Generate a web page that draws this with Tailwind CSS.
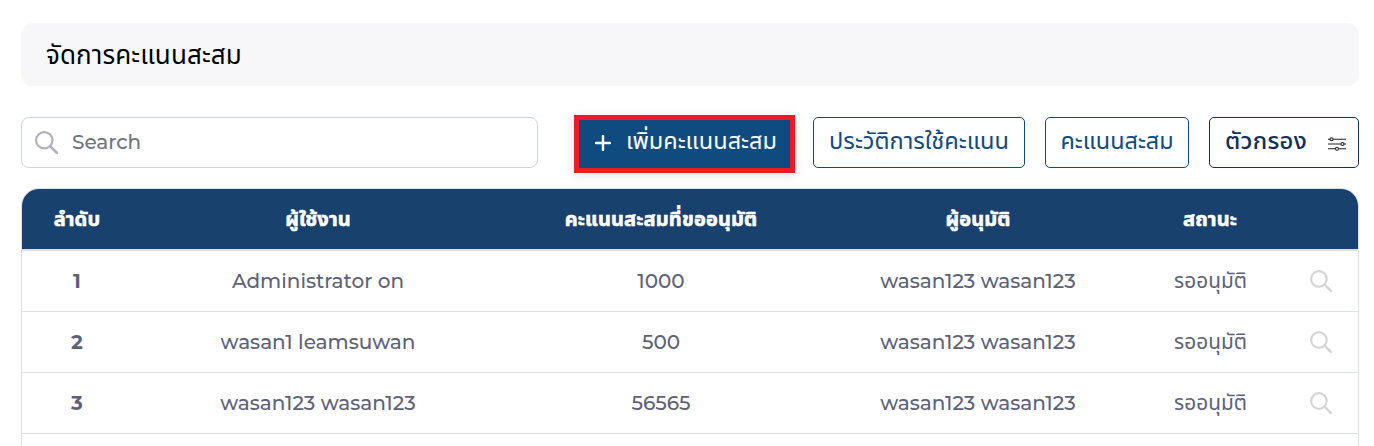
<!DOCTYPE html>
<html lang="th">
<head>
<meta charset="utf-8">
<title>จัดการคะแนนสะสม</title>
<script src="https://cdn.jsdelivr.net/npm/@tailwindcss/browser@4"></script>
</head>
<body class="h-[446px] overflow-hidden bg-white pl-[21px] pr-[15px] pt-[23px] font-['Montserrat','Inter','Noto_Sans_Thai',sans-serif] text-[20px] text-[#5e6278]">
<svg class="hidden"><symbol id="lens" viewBox="0 0 22 22"><circle cx="8.9" cy="8.9" r="7.8" fill="none" stroke="currentColor" stroke-width="2.1"/><path d="M14.5 14.5L20.8 20.8" stroke="currentColor" stroke-width="2.4" stroke-linecap="round"/></symbol></svg>
<header class="flex h-[63px] items-center rounded-xl bg-[#f7f7fa] pl-[25px] text-[26px] tracking-[0.1px] text-black"><h1 class="whitespace-nowrap pt-px">จัดการคะแนนสะสม</h1></header>
<div class="mt-[29px] flex h-[58px] items-start">
  <label class="mt-[2px] flex h-[51px] w-[517px] items-center rounded-lg border border-[#ced4da] pb-px pl-[13px]">
    <svg class="size-[23px] text-[#b2b0bb]"><use href="#lens"/></svg>
    <span class="ml-[14px] text-[20px] font-medium text-[#6c757d]">Search</span>
  </label>
  <button class="ml-[36px] flex h-[58px] w-[221px] items-center border-[5px] border-[#ed1c24] bg-[#104b80] pb-[6px] pl-[16px] text-[23.5px] text-white shadow-[0_2px_10px_rgba(0,0,0,0.12)]">
    <svg class="mt-[3px] size-4" viewBox="0 0 16 16"><path d="M8 1v14M1 8h14" stroke="white" stroke-width="2.4" stroke-linecap="round"/></svg>
    <span class="ml-[15px] whitespace-nowrap">เพิ่มคะแนนสะสม</span>
  </button>
  <button class="ml-[18px] mt-[2px] flex h-[51px] w-[212px] items-center justify-center whitespace-nowrap rounded-[5px] border border-[#104b80] pb-[3px] text-[23.6px] text-[#104b80]">ประวัติการใช้คะแนน</button>
  <button class="ml-[20px] mt-[2px] flex h-[51px] w-[144px] items-center justify-center whitespace-nowrap rounded-[5px] border border-[#104b80] pb-[3px] text-[23.4px] text-[#104b80]">คะแนนสะสม</button>
  <button class="ml-[20px] mt-[2px] flex h-[51px] w-[150px] items-center justify-between whitespace-nowrap rounded-[5px] border border-[#12305a] pl-[15px] pr-[12px] pb-[3px] text-[23.8px] font-medium tracking-[0.3px] text-[#12305a]"><span>ตัวกรอง</span>
    <svg class="mt-[5px] h-[14px] w-[18px]" viewBox="0 0 18 14" fill="white" stroke="#222" stroke-width="1.1"><path d="M0 2.2h18M0 7h18M0 11.8h18"/><circle cx="3.5" cy="2.2" r="1.5"/><circle cx="14.5" cy="7" r="1.5"/><circle cx="9" cy="11.8" r="1.5"/></svg>
  </button>
</div>
<main class="mt-[15px] h-[258px] overflow-hidden rounded-t-[18px] border border-b-0 border-[#dee2e6]">
<table class="w-[1336px] table-fixed border-collapse text-center">
<colgroup><col class="w-[110px]"><col class="w-[372px]"><col class="w-[314px]"><col class="w-[320px]"><col class="w-[144px]"><col class="w-[76px]"></colgroup>
<thead><tr class="h-[61px] border-b-2 border-[#dee2e6] bg-[#19416d] text-[20px] leading-6 tracking-[0.15px] text-white [-webkit-text-stroke:0.6px_white]"><th>ลำดับ</th><th>ผู้ใช้งาน</th><th>คะแนนสะสมที่ขออนุมัติ</th><th>ผู้อนุมัติ</th><th>สถานะ</th><th></th></tr></thead>
<tbody class="font-medium">
<tr class="h-[61px] border-b border-[#dee2e6]"><th>1</th><td>Administrator on</td><td>1000</td><td>wasan123 wasan123</td><td class="pl-px text-[20.8px] font-normal">รออนุมัติ</td><td class="pl-px pt-px"><svg class="mx-auto size-[22px] text-[#d5d5d5]"><use href="#lens"/></svg></td></tr>
<tr class="h-[61px] border-b border-[#dee2e6]"><th>2</th><td>wasan1 leamsuwan</td><td>500</td><td>wasan123 wasan123</td><td class="pl-px text-[20.8px] font-normal">รออนุมัติ</td><td class="pl-px pt-px"><svg class="mx-auto size-[22px] text-[#d5d5d5]"><use href="#lens"/></svg></td></tr>
<tr class="h-[61px] border-b border-[#dee2e6]"><th>3</th><td>wasan123 wasan123</td><td>56565</td><td>wasan123 wasan123</td><td class="pl-px text-[20.8px] font-normal">รออนุมัติ</td><td class="pl-px pt-px"><svg class="mx-auto size-[22px] text-[#d5d5d5]"><use href="#lens"/></svg></td></tr>
</tbody></table>
</main>
</body>
</html>
